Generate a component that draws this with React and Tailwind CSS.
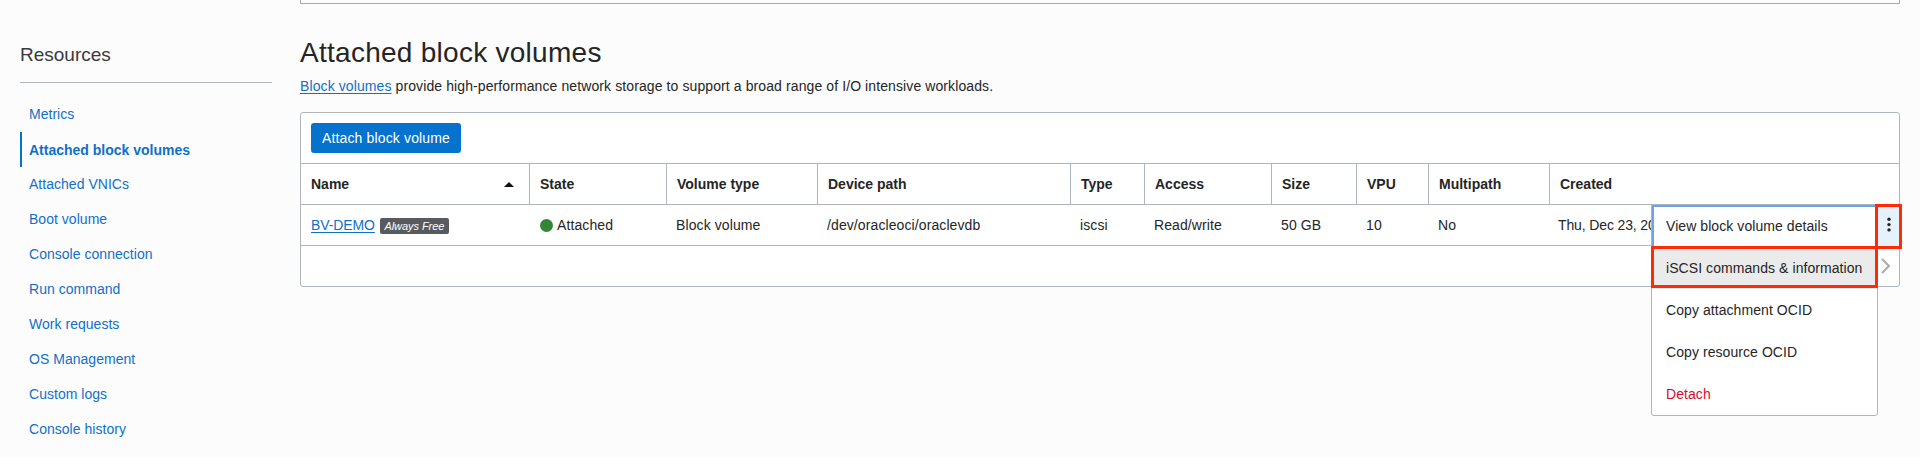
import React from "react";

const resources = [
  "Metrics",
  "Attached block volumes",
  "Attached VNICs",
  "Boot volume",
  "Console connection",
  "Run command",
  "Work requests",
  "OS Management",
  "Custom logs",
  "Console history",
];

const columns = ["Name", "State", "Volume type", "Device path", "Type", "Access", "Size", "VPU", "Multipath", "Created"];

const grid = "grid grid-cols-[228px_137px_151px_253px_74px_127px_85px_72px_121px_350px]";

function Sidebar() {
  return (
    <aside className="w-[252px] shrink-0">
      <h2 className="mt-[42px] h-[40px] text-[19px] leading-[25px] text-[#3a3a3a]">Resources</h2>
      <div className="h-px bg-[#aeb5bf]" />
      <nav className="mt-[14px]">
        {resources.map((label) =>
          label === "Attached block volumes" ? (
            <a key={label} className="block h-[35px] border-l-2 border-[#0572ce] pl-[7px] text-sm leading-[37px] font-bold text-[#0f70cc]">
              {label}
            </a>
          ) : (
            <a key={label} className="block h-[35px] pl-[9px] text-sm leading-[34px] tracking-[0.03px] text-[#1170ca]">
              {label}
            </a>
          )
        )}
      </nav>
    </aside>
  );
}

function ActionMenu() {
  const item = "flex h-[42px] items-center pl-[14px] tracking-[0.07px]";
  return (
    <div className="absolute top-[91px] left-[1350px] h-[212px] w-[227px] rounded-b-[3px] border border-[#aeb5bf] bg-white">
      <div className="flex h-[42px] items-center border-t-2 border-l-2 border-[#70a3e4] pb-[2px] pl-[12px] tracking-[0.07px]">
        View block volume details
      </div>
      <div className={item + " bg-[#ebebeb]"}>iSCSI commands &amp; information</div>
      <div className={item}>Copy attachment OCID</div>
      <div className={item}>Copy resource OCID</div>
      <div className={item + " text-[#dc0b28]"}>Detach</div>
      <div className="absolute top-[41px] left-[-1px] h-[42px] w-[227px] border-3 border-[#ff2b06]" />
    </div>
  );
}

function VolumesTable() {
  return (
    <section className="relative mt-[16px] h-[175px] w-[1600px] rounded-[3px] border border-[#aeb5bf] bg-white">
      <div className="flex h-[50px] items-center pl-[10px]">
        <button className="h-[30px] w-[150px] rounded-[3px] bg-[#0572ce] text-sm leading-[30px] tracking-[0.15px] text-white">
          Attach block volume
        </button>
      </div>
      <div className={grid + " h-[42px] border-y border-[#aeb5bf] font-bold"}>
        {columns.map((name, i) => (
          <div key={name} className={(i ? "border-l border-[#aeb5bf] pl-[10px] " : "pl-[10px] ") + "flex items-center"}>
            {name}
            {i === 0 && (
              <svg className="mt-px ml-auto mr-[15px]" width="10" height="5" viewBox="0 0 10 5">
                <path d="M0 5 5 0l5 5z" fill="#111" />
              </svg>
            )}
          </div>
        ))}
      </div>
      <div className={grid + " h-[41px] border-b border-[#aeb5bf] tracking-[0.1px] *:flex *:items-center *:pl-[10px]"}>
        <div>
          <a className="text-[#1170ca] tracking-[-0.1px] underline decoration-1 underline-offset-2">BV-DEMO</a>
          <span className="mt-[2px] ml-[5px] h-[16px] w-[69px] rounded-[2px] bg-[#575b5e] text-center text-[11px] leading-[16px] tracking-[-0.05px] text-white italic">
            Always Free
          </span>
        </div>
        <div className="pl-[11px]!">
          <span className="mr-[4px] size-[13px] rounded-full bg-[#338637]" />
          Attached
        </div>
        <div>Block volume</div>
        <div>/dev/oracleoci/oraclevdb</div>
        <div>iscsi</div>
        <div>Read/write</div>
        <div>50 GB</div>
        <div>10</div>
        <div>No</div>
        <div className="pl-[9px]! tracking-[-0.13px] whitespace-nowrap">Thu, Dec 23, 2021</div>
      </div>
      <div className="flex h-[40px] items-center justify-end pr-[8px]">
        <svg width="10" height="18" viewBox="0 0 10 18" fill="none" stroke="#aaaaaa" strokeWidth="2">
          <path d="m1 2 7 7-7 7" />
        </svg>
      </div>
      <ActionMenu />
      <div className="absolute top-[91px] left-[1574px] flex h-[45px] w-[27px] flex-col items-center border-3 border-[#ff2b06] bg-[#e5f2fc] pt-[10px]">
        <svg width="4" height="16" viewBox="0 0 4 16" fill="#252525">
          <circle cx="2" cy="2.3" r="1.7" />
          <circle cx="2" cy="7.6" r="1.7" />
          <circle cx="2" cy="12.9" r="1.7" />
        </svg>
      </div>
    </section>
  );
}

export default function App() {
  return (
    <div className="flex h-[457px] w-[1920px] gap-[28px] overflow-hidden bg-[#fcfcfc] pl-[20px] font-['Liberation_Sans',Arial,sans-serif] text-sm text-[#252525]">
      <Sidebar />
      <main className="w-[1600px] shrink-0">
        <div className="h-[4px] border-x border-b border-[#aaaaaa]" />
        <h1 className="mt-[32px] text-[28px] leading-[34px] tracking-[0.27px]">Attached block volumes</h1>
        <p className="mt-[6px] leading-[20px] tracking-[0.1px]">
          <a className="text-[#1170ca] underline decoration-1 underline-offset-2">Block volumes</a> provide high-performance network storage to
          support a broad range of I/O intensive workloads.
        </p>
        <VolumesTable />
      </main>
    </div>
  );
}
